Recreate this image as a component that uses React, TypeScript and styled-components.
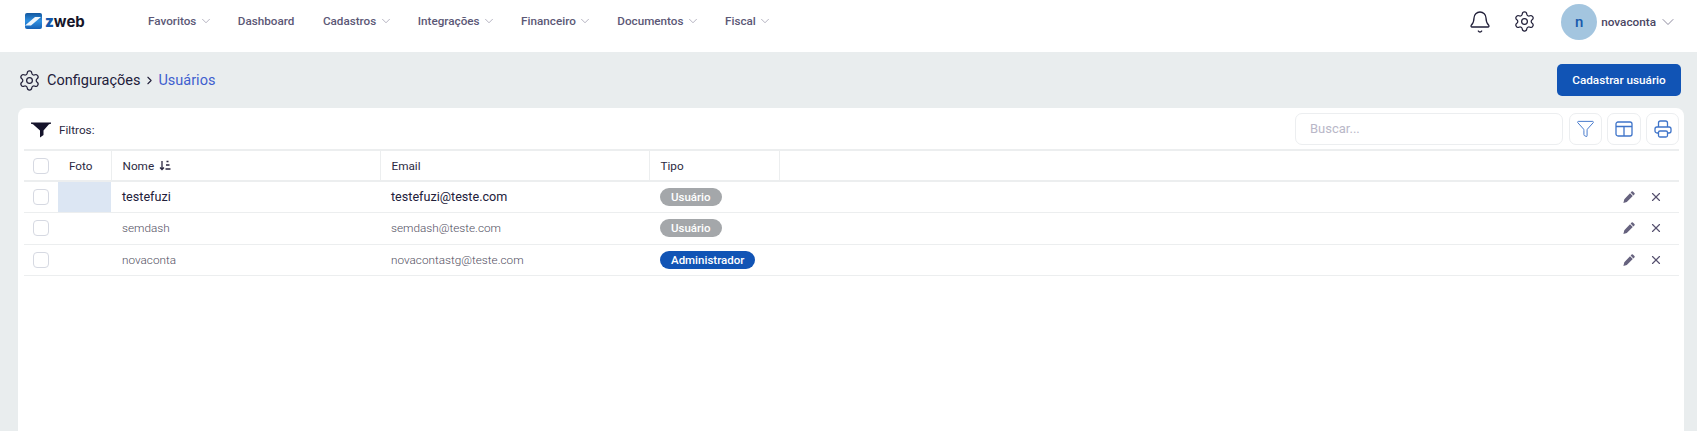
import React from "react";
import styled, { createGlobalStyle } from "styled-components";
import { Bell, ChevronDown, Filter, Settings, X, ChevronRight } from "lucide-react";

const menu = [
  { label: "Favoritos", arrow: true },
  { label: "Dashboard", arrow: false },
  { label: "Cadastros", arrow: true },
  { label: "Integrações", arrow: true },
  { label: "Financeiro", arrow: true },
  { label: "Documentos", arrow: true },
  { label: "Fiscal", arrow: true },
];

const users = [
  { name: "testefuzi", email: "testefuzi@teste.com", type: "Usuário", active: true },
  { name: "semdash", email: "semdash@teste.com", type: "Usuário", active: false },
  { name: "novaconta", email: "novacontastg@teste.com", type: "Administrador", active: false },
];

const Logo = () => (
  <LogoBox>
    <svg width="17" height="16" viewBox="0 0 17 16">
      <defs>
        <linearGradient id="logoFill" x1="0" y1="0" x2="0" y2="1">
          <stop offset="0" stopColor="#12579f" />
          <stop offset="0.5" stopColor="#2f8fe0" />
          <stop offset="1" stopColor="#1560b5" />
        </linearGradient>
      </defs>
      <rect width="17" height="16" rx="2" fill="url(#logoFill)" />
      <path d="M0 12.500 L10 4 H16 L6 12.500 Z" fill="#eef6fc" />
    </svg>
    <LogoText>
      <b>z</b>web
    </LogoText>
  </LogoBox>
);

const PencilIcon = () => (
  <svg width="12" height="12" viewBox="0 0 12 12">
    <path d="M8.600.6a.9.9 0 0 1 1.300 0l1.500 1.500a.9.9 0 0 1 0 1.300l-1 1L7.600 1.600zM7 2.200 9.800 5l-6 6-3.400.9.900-3.700z" fill="#66627e" />
  </svg>
);

const SortIcon = () => (
  <svg width="12" height="11" viewBox="0 0 12 11" fill="none" stroke="#2b2942" strokeWidth="1.300">
    <path d="M3 1v8.500M1 7.500l2 2 2-2" />
    <path d="M7.500 1.500h2M7 5h3.500M6.500 9h5" />
  </svg>
);

const LayoutIcon = () => (
  <svg width="18" height="16" viewBox="0 0 18 16" fill="none" stroke="#3f74c9" strokeWidth="1.300">
    <rect x="1" y="1" width="16" height="14" rx="2" />
    <path d="M1 5.500h16M9 5.500V15" />
  </svg>
);

const PrintIcon = () => (
  <svg width="18" height="18" viewBox="0 0 18 18" fill="none" stroke="#3f74c9" strokeWidth="1.300">
    <path d="M4.500 7V3a2 2 0 0 1 2-2h5a2 2 0 0 1 2 2v4" />
    <rect x="1" y="7" width="16" height="6" rx="2" />
    <rect x="4.500" y="11" width="9" height="6" rx="1.500" fill="#fff" />
  </svg>
);

export default function App() {
  return (
    <Page>
      <GlobalStyle />
      <Header>
        <Logo />
        <Nav>
          {menu.map((item) => (
            <NavItem key={item.label}>
              {item.label}
              {item.arrow && <ChevronDown size={14} strokeWidth={1.100} color="#8d8aa0" />}
            </NavItem>
          ))}
        </Nav>
        <UserArea>
          <Bell size={24} strokeWidth={1.300} color="#22203a" />
          <GearSlot>
            <Settings size={23} strokeWidth={1.300} color="#22203a" />
          </GearSlot>
          <Avatar>n</Avatar>
          <UserName>novaconta</UserName>
          <ChevronDown size={20} strokeWidth={1} color="#77748c" />
        </UserArea>
      </Header>

      <TitleBar>
        <Crumbs>
          <Settings size={23} strokeWidth={1.300} color="#22203a" />
          <CrumbText>Configurações</CrumbText>
          <ChevronRight size={13} strokeWidth={2} color="#22203a" />
          <CrumbLink>Usuários</CrumbLink>
        </Crumbs>
        <PrimaryButton>Cadastrar usuário</PrimaryButton>
      </TitleBar>

      <Card>
        <Toolbar>
          <FilterLabel>
            <svg width="20" height="16" viewBox="0 0 20 16">
              <path d="M0 .500h20v1.200l-2 .600-5.500 6.200V13l-3.500 2.500V8.500L2 2.300 0 1.700z" fill="#15132b" />
            </svg>
            Filtros:
          </FilterLabel>
          <Tools>
            <Search placeholder="Buscar..." />
            <ToolButton>
              <Filter size={19} strokeWidth={1.200} color="#3f74c9" />
            </ToolButton>
            <ToolButton $wide>
              <LayoutIcon />
            </ToolButton>
            <ToolButton>
              <PrintIcon />
            </ToolButton>
          </Tools>
        </Toolbar>

        <Table>
          <colgroup>
            <col width={34} />
            <col width={53} />
            <col width={269} />
            <col width={269} />
            <col width={130} />
            <col />
          </colgroup>
          <thead>
            <tr>
              <Th $plain>
                <Check />
              </Th>
              <Th>Foto</Th>
              <Th>
                <NameHead>
                  Nome <SortIcon />
                </NameHead>
              </Th>
              <Th>Email</Th>
              <Th>Tipo</Th>
              <Th $plain />
            </tr>
          </thead>
          <tbody>
            {users.map((user) => (
              <Row key={user.name} $active={user.active}>
                <td>
                  <Check />
                </td>
                <PhotoCell $active={user.active} />
                <td>{user.name}</td>
                <td>{user.email}</td>
                <td>
                  <Badge $admin={user.type === "Administrador"}>{user.type}</Badge>
                </td>
                <td>
                  <Actions>
                    <PencilIcon />
                    <X size={14} strokeWidth={2} color="#56516f" />
                  </Actions>
                </td>
              </Row>
            ))}
          </tbody>
        </Table>
      </Card>
    </Page>
  );
}

const GlobalStyle = createGlobalStyle`
  html, body {
    margin: 0;
    height: 100%;
    overflow: hidden;
  }
  body {
    background: #e9edee;
    font-family: Roboto, "Liberation Sans", sans-serif;
  }
`;

const Page = styled.div`
  width: 1697px;
  height: 431px;
  overflow: hidden;
`;

const Header = styled.header`
  height: 52px;
  background: #fff;
  display: flex;
  align-items: center;
  padding: 0 19px 0 25px;
`;

const LogoBox = styled.div`
  display: flex;
  align-items: center;
  gap: 3px;
  width: 123px;
  margin-top: -10px;
`;

const LogoText = styled.span`
  font: 700 15px Inter, sans-serif;
  color: #16162a;
  b {
    color: #1659ad;
  }
`;

const Nav = styled.nav`
  display: flex;
  align-items: center;
  gap: 28.5px;
  margin-top: -10px;
`;

const NavItem = styled.div`
  display: flex;
  align-items: center;
  gap: 2.5px;
  font-size: 11.7px;
  font-weight: 500;
  color: #5c5876;
  svg {
    margin-right: -3.5px;
  }
`;

const UserArea = styled.div`
  display: flex;
  align-items: center;
  margin-left: auto;
  margin-top: -9px;
`;

const GearSlot = styled.div`
  margin-left: 21px;
  display: flex;
`;

const Avatar = styled.div`
  width: 36px;
  height: 36px;
  margin-left: 25px;
  border-radius: 50%;
  background: #a3c5df;
  color: #1659ad;
  display: flex;
  align-items: center;
  justify-content: center;
  font-size: 15px;
  font-weight: 500;
`;

const UserName = styled.span`
  margin: 0 2px 0 4px;
  font-size: 11.75px;
  font-weight: 500;
  color: #4a4663;
`;

const TitleBar = styled.div`
  height: 56px;
  display: flex;
  align-items: center;
  justify-content: space-between;
  padding: 0 16px 0 18px;
`;

const Crumbs = styled.div`
  display: flex;
  align-items: center;
`;

const CrumbText = styled.span`
  margin: 0 3px 0 6px;
  font-size: 14.5px;
  color: #22203a;
`;

const CrumbLink = styled.span`
  margin-left: 2px;
  font-size: 14.5px;
  color: #3f5fcf;
`;

const PrimaryButton = styled.button`
  width: 124px;
  height: 32px;
  padding: 0;
  border: none;
  border-radius: 5px;
  background: #1154b5;
  color: #fff;
  font: 500 11.75px Roboto, sans-serif;
`;

const Card = styled.section`
  margin: 0 13px 0 18px;
  height: 330px;
  padding: 0 5px 0 6px;
  background: #fff;
  border-radius: 8px 8px 0 0;
`;

const Toolbar = styled.div`
  height: 41px;
  display: flex;
  align-items: center;
  justify-content: space-between;
  padding-left: 7px;
`;

const FilterLabel = styled.div`
  display: flex;
  align-items: center;
  gap: 8px;
  padding-top: 3px;
  font-size: 11.75px;
  color: #2b2942;
`;

const Tools = styled.div`
  display: flex;
  align-items: center;
  gap: 5px;
`;

const Search = styled.input`
  box-sizing: border-box;
  width: 268px;
  height: 32px;
  margin-right: 1px;
  padding: 0 14px;
  border: 1px solid #eceef0;
  border-radius: 7px;
  outline: none;
  font: 400 13px Roboto, sans-serif;
  &::placeholder {
    color: #b9b7c8;
  }
`;

const ToolButton = styled.button<{ $wide?: boolean }>`
  width: ${(p) => (p.$wide ? 34 : 33)}px;
  height: 32px;
  padding: 0;
  display: flex;
  align-items: center;
  justify-content: center;
  background: #fff;
  border: 1px solid #eceef0;
  border-radius: 7px;
`;

const Table = styled.table`
  width: 100%;
  table-layout: fixed;
  border-collapse: collapse;
  border-top: 2px solid #eceeef;
  td {
    padding: 0 0 0 11px;
    border-bottom: 1px solid #eceeef;
  }
  td:first-child {
    padding-left: 9px;
  }
`;

const Th = styled.th<{ $plain?: boolean }>`
  height: 29px;
  padding: 0 0 0 ${(p) => (p.$plain ? 9 : 11)}px;
  text-align: left;
  font-size: 11.75px;
  font-weight: 400;
  color: #2b2942;
  border-bottom: 2px solid #eceeef;
  border-right: ${(p) => (p.$plain ? "none" : "1px solid #eceeef")};
`;

const NameHead = styled.span`
  display: inline-flex;
  align-items: center;
  gap: 5px;
`;

const Row = styled.tr<{ $active: boolean }>`
  height: 31px;
  font-size: ${(p) => (p.$active ? "12.6px" : "11.75px")};
  font-weight: ${(p) => (p.$active ? 400 : 300)};
  color: ${(p) => (p.$active ? "#22203a" : "#4f4d60")};
  &:nth-child(2) {
    height: 32px;
  }
`;

const PhotoCell = styled.td<{ $active: boolean }>`
  background: ${(p) => (p.$active ? "#dce6f3" : "transparent")};
`;

const Check = styled.span`
  display: block;
  width: 14px;
  height: 14px;
  border: 1px solid #d6d9e2;
  border-radius: 4px;
`;

const Badge = styled.span<{ $admin: boolean }>`
  display: inline-block;
  vertical-align: middle;
  padding: 0 11px;
  height: 18px;
  line-height: 18px;
  border-radius: 9px;
  background: ${(p) => (p.$admin ? "#1154b5" : "#a4a7aa")};
  color: #fff;
  font-size: 11.5px;
  font-weight: 500;
`;

const Actions = styled.div`
  display: flex;
  justify-content: flex-end;
  align-items: center;
  gap: 14px;
  padding-right: 16px;
`;
